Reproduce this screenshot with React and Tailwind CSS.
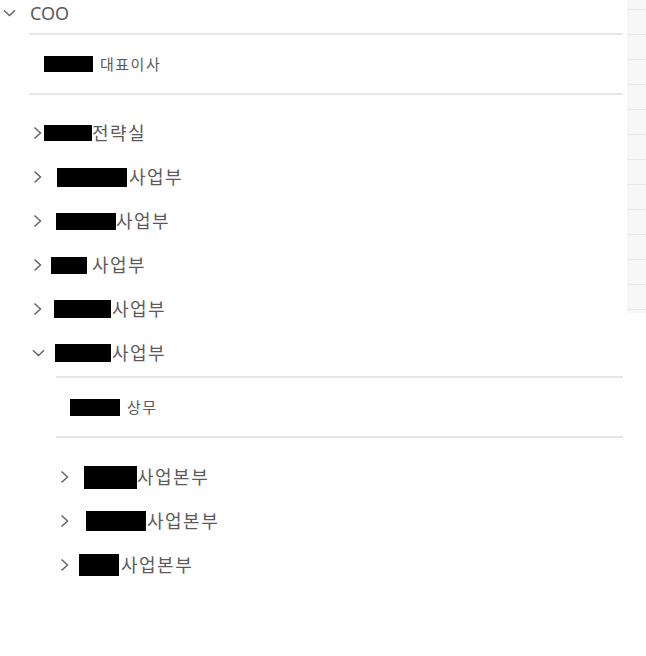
import React from "react"

const FONT = { fontFamily: '"Noto Sans", "Noto Sans CJK KR", sans-serif' }

const ChevronRight = ({ className = "" }) => (
  <svg width="9" height="14" viewBox="0 0 9 14" className={className}>
    <polyline points="1.5,1.5 7.5,7 1.5,12.5" fill="none" stroke="#5f5f5f" strokeWidth="1.4" />
  </svg>
)

const ChevronDown = ({ className = "" }) => (
  <svg width="13" height="8" viewBox="0 0 13 8" className={className}>
    <polyline points="1,1.2 6.5,6.5 12,1.2" fill="none" stroke="#5f5f5f" strokeWidth="1.3" />
  </svg>
)

// redacted name blocks, sized to the picture
const Redacted = ({ w, h, ml }) => (
  <div className="bg-black shrink-0" style={{ width: w, height: h, marginLeft: ml }} />
)

const topRows = [
  { box: [48, 16, 2], label: "전략실", gap: 0 },
  { box: [70, 19, 15], label: "사업부", gap: 2 },
  { box: [60, 17, 14], label: "사업부", gap: 0 },
  { box: [36, 17, 9], label: "사업부", gap: 5 },
  { box: [57, 18, 12], label: "사업부", gap: 1 },
]

const subRows = [
  { box: [53, 23, 15], label: "사업본부", gap: 0 },
  { box: [60, 20, 17], label: "사업본부", gap: 1 },
  { box: [40, 22, 10], label: "사업본부", gap: 2 },
]

const TreeRow = ({ row }) => (
  <div className="h-[44px] flex items-center">
    <ChevronRight className="shrink-0" />
    <Redacted w={row.box[0]} h={row.box[1]} ml={row.box[2]} />
    <span
      className="text-[18px] leading-none tracking-[1.5px] text-[#5a5a5a]"
      style={{ marginLeft: row.gap }}
    >
      {row.label}
    </span>
  </div>
)

const Divider = () => <div className="h-[2px] bg-[#e6e6e6]" />

export default function App() {
  return (
    <div className="w-[646px] h-[656px] bg-white flex overflow-hidden" style={FONT}>
      <div className="w-[623px] shrink-0">
        <div className="h-[26px] flex items-center pl-[3px]">
          <ChevronDown />
          <span className="ml-[14px] text-[18px] leading-none text-[#5a5a5a]">COO</span>
        </div>

        <div className="ml-[29px] mt-[7px]">
          <Divider />
          <div className="h-[58px] flex items-center">
            <Redacted w={49} h={16} ml={15} />
            <span className="ml-[7px] text-[15px] leading-none tracking-[1.5px] text-[#5a5a5a]">대표이사</span>
          </div>
          <Divider />
        </div>

        <div className="pl-[33px] pt-[16px]">
          {topRows.map((row, i) => (
            <TreeRow key={i} row={row} />
          ))}
          <div className="h-[44px] flex items-center">
            <ChevronDown className="shrink-0 -ml-[1px]" />
            <Redacted w={56} h={18} ml={10} />
            <span className="ml-[1px] text-[18px] leading-none tracking-[1.5px] text-[#5a5a5a]">사업부</span>
          </div>
        </div>

        <div className="ml-[56px] mt-[1px]">
          <Divider />
          <div className="h-[58px] flex items-center">
            <Redacted w={50} h={17} ml={14} />
            <span className="ml-[7px] text-[15px] leading-none tracking-[1.5px] text-[#5a5a5a]">상무</span>
          </div>
          <Divider />
        </div>

        <div className="pl-[60px] pt-[17px]">
          {subRows.map((row, i) => (
            <TreeRow key={i} row={row} />
          ))}
        </div>
      </div>

      <div className="ml-[4px] w-[19px] shrink-0 self-start bg-[#f7f7f7]">
        <div className="h-[9px]" />
        {Array.from({ length: 12 }).map((_, i) => (
          <div key={i} className="h-[25px] border-t border-[#e6e6e6]" />
        ))}
        <div className="h-[4px] border-t border-[#e6e6e6]" />
      </div>
    </div>
  )
}
